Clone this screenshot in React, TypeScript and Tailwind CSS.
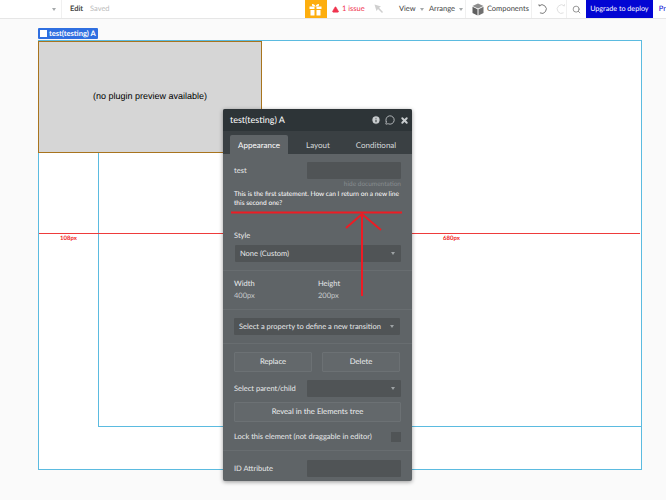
import { Info, MessageCircle, Search, TriangleAlert, X } from "lucide-react"

function Caret() {
  return <span className="ml-[4px] inline-block h-0 w-0 border-x-[2.5px] border-t-[3px] border-x-transparent border-t-[#a5a9ab]" />
}

function Arc({ color, flip }: { color: string; flip?: boolean }) {
  return (
    <svg width="11" height="11" viewBox="0 0 11 11" fill="none" stroke={color} strokeWidth="1" className={flip ? "-scale-x-100" : ""}>
      <path d="M2.500 1.500H1V0M1.200 1.700A4.500 4.500 0 1 1 2 9" />
    </svg>
  )
}

function GiftIcon() {
  return (
    <svg width="13" height="13" viewBox="0 0 13 13" fill="white">
      <path d="M0.500 3.500H5.500V6H0.500ZM7.500 3.500H12.500V6H7.500ZM1.500 7H5.500V12.500H1.500ZM7.500 7H11.500V12.500H7.500Z" />
      <path d="M6.500 3.500C5 0.500 2.500 0.500 3 2.200C3.300 3.200 5 3.500 6.500 3.500C8 3.500 9.700 3.200 10 2.200C10.500 0.500 8 0.500 6.500 3.500Z" />
    </svg>
  )
}

function CursorIcon() {
  return (
    <svg width="10" height="10" viewBox="0 0 10 10" fill="#cfcfcf">
      <path d="M0.500 0.500L7 2.500L5 3.800L9 8L8 9L4 5L2.500 7Z" />
    </svg>
  )
}

function CubeIcon() {
  return (
    <svg width="12" height="13" viewBox="0 0 12 13">
      <path d="M6 0.500L11.500 3L6 5.500L0.500 3Z" fill="#8d8d8d" />
      <path d="M0.500 3.800L5.500 6.200V12.500L0.500 10Z" fill="#5f5f5f" />
      <path d="M11.500 3.800L6.500 6.200V12.500L11.500 10Z" fill="#6f6f6f" />
    </svg>
  )
}

function TopBar() {
  return (
    <div className="flex h-[19px] items-stretch whitespace-nowrap border-b border-[#e6e6e6] bg-white text-[7.5px] text-[#444]">
      <div className="flex w-[62px] items-center justify-end border-r border-[#f0f0f0] pr-[5px]">
        <Caret />
      </div>
      <div className="flex w-[243px] items-center pl-[8px]">
        <span className="w-[20px] font-bold">Edit</span>
        <span className="text-[#bbb]">Saved</span>
      </div>
      <div className="flex w-[22px] items-center justify-center bg-[#fdae0e]">
        <GiftIcon />
      </div>
      <div className="flex w-[47px] items-center pl-[5px] text-[#f0344f]">
        <TriangleAlert size={7} fill="#f0344f" className="mr-[3px]" />
        <span>1 issue</span>
      </div>
      <div className="flex w-[25px] items-center">
        <CursorIcon />
      </div>
      <div className="flex w-[30px] items-center">View<Caret /></div>
      <div className="flex w-[37px] items-center border-r border-[#f0f0f0]">Arrange<Caret /></div>
      <div className="flex w-[66px] items-center border-r border-[#f0f0f0] pl-[6px]">
        <span className="mr-[3px] flex"><CubeIcon /></span>
        Components
      </div>
      <div className="flex w-[35px] items-center gap-[7px] border-r border-[#f0f0f0] pl-[6px]">
        <Arc color="#777" />
        <Arc color="#ddd" flip />
      </div>
      <div className="flex w-[19px] items-center justify-center">
        <Search size={9} className="text-[#777]" />
      </div>
      <div className="flex w-[67px] items-center justify-center bg-[#0205d3] text-[7.2px] text-white">Upgrade to deploy</div>
      <div className="flex flex-1 items-center pl-[6px] text-[#0205d3]">Pr</div>
    </div>
  )
}

function Field() {
  return <div className="h-[17px] w-[94px] rounded-[1px] bg-[#505456]" />
}

function Select({ label, width }: { label: string; width: string }) {
  return (
    <div className={`flex h-[17px] items-center rounded-[1px] bg-[#505456] pl-[5px] pr-[6px] text-[#e6e8e9] ${width}`}>
      {label}
      <span className="ml-auto h-0 w-0 border-x-[2.5px] border-t-[3px] border-x-transparent border-t-[#9ea2a4]" />
    </div>
  )
}

function PanelButton({ label, className }: { label: string; className: string }) {
  return (
    <div className={`flex h-[20px] items-center justify-center rounded-[1px] border border-[#6c7174] bg-[#63686b] text-[7.7px] text-[#eef0f1] ${className}`}>
      {label}
    </div>
  )
}

function Panel() {
  return (
    <div className="absolute left-[223px] top-[109px] h-[372px] w-[189px] overflow-hidden rounded-[2px] bg-[#5f6467] text-[7.5px] text-[#e8eaeb] shadow-[0_1px_4px_rgba(0,0,0,0.4)]">
      <div className="flex h-[22px] items-center justify-between bg-[#2d3437] pl-[7px] pr-[3px]">
        <span className="text-[9px] text-white">test(testing) A</span>
        <div className="flex items-center gap-[4px] text-[#c9cdcf]">
          <Info size={10} fill="#c9cdcf" stroke="#2d3437" strokeWidth={2.5} />
          <MessageCircle size={10} />
          <X size={9} strokeWidth={5} className="ml-[1px]" />
        </div>
      </div>
      <div className="flex h-[23px] items-end bg-[#3a4043] pl-[7px] text-[8px] text-[#d5d8da]">
        <div className="flex h-[19px] w-[58px] items-center justify-center rounded-t-[2px] bg-[#5f6467] text-white">Appearance</div>
        <div className="flex h-[19px] w-[60px] items-center justify-center">Layout</div>
        <div className="flex h-[19px] w-[56px] items-center justify-center">Conditional</div>
      </div>

      <div className="flex items-center justify-between px-[11px] pt-[8px]">
        <span>test</span>
        <Field />
      </div>
      <div className="mt-px pr-[11px] text-right text-[6.5px] leading-[9px] text-[#878c8f]">hide documentation</div>
      <p className="mt-px px-[11px] text-[6.6px] leading-[9px] text-white">
        This is the first statement. How can I return on a new line this second one?
      </p>

      <div className="mt-[23px] px-[11px] leading-[10px]">Style</div>
      <div className="mt-[4px] border-b border-[#686d70] pb-[8px] pl-[12px] pr-[11px]">
        <Select label="None (Custom)" width="w-[166px]" />
      </div>
      <div className="flex border-b border-[#686d70] pb-[7px] pl-[11px] pt-[7px] leading-[12px]">
        <div className="w-[84px]"><div>Width</div><div className="text-[#c4c8ca]">400px</div></div>
        <div><div>Height</div><div className="text-[#c4c8ca]">200px</div></div>
      </div>
      <div className="border-b border-[#686d70] pb-[8px] pl-[11px] pt-[8px]">
        <Select label="Select a property to define a new transition" width="w-[166px]" />
      </div>

      <div className="flex gap-[10px] pl-[11px] pt-[8px]">
        <PanelButton label="Replace" className="w-[78px]" />
        <PanelButton label="Delete" className="w-[78px]" />
      </div>
      <div className="flex items-center justify-between px-[11px] pt-[8px]">
        <span>Select parent/child</span>
        <Select label="" width="w-[94px]" />
      </div>
      <div className="px-[11px] pt-[5px]">
        <PanelButton label="Reveal in the Elements tree" className="w-full" />
      </div>
      <div className="flex items-center justify-between border-b border-[#686d70] px-[11px] pb-[8px] pt-[9px]">
        <span>Lock this element (not draggable in editor)</span>
        <div className="h-[10px] w-[10px] bg-[#505456]" />
      </div>
      <div className="flex items-center justify-between px-[11px] pt-[9px]">
        <span>ID Attribute</span>
        <Field />
      </div>
    </div>
  )
}

function Canvas() {
  return (
    <>
      <div className="absolute left-[38px] top-[28px] flex h-[11px] w-[60px] items-center gap-[2px] whitespace-nowrap rounded-[1px] bg-[#2f6fe0] px-[2px] text-[7.5px] font-bold text-white">
        <span className="h-[7px] w-[7px] shrink-0 bg-white" />
        test(testing) A
      </div>
      <div className="absolute left-[38px] top-[40px] h-[430px] w-[604px] border border-[#5bbbe0] bg-white" />
      <div className="absolute left-[38px] top-[41px] flex h-[112px] w-[224px] items-center justify-center border border-[#a8741e] bg-[#d6d6d6] font-['Liberation_Sans',sans-serif] text-[9px] text-black">
        (no plugin preview available)
      </div>
      <div className="absolute left-[98px] top-[153px] h-[274px] w-[544px] border-b border-l border-r border-[#5bbbe0]" />
      <div className="absolute left-[39px] top-[233px] h-px w-[601px] bg-[#ee3b3b]" />
      <span className="absolute left-[60px] top-[234px] text-[6px] font-bold text-[#f01c1c]">108px</span>
      <span className="absolute left-[443px] top-[234px] text-[6px] font-bold text-[#f01c1c]">680px</span>
    </>
  )
}

function Annotation() {
  return (
    <svg className="absolute left-0 top-0" width="666" height="500" fill="none" stroke="#ed1c24" strokeWidth="2">
      <path d="M231 212.500H402" />
      <path d="M362 296V214M346 228L362 214L381 230" />
    </svg>
  )
}

export default function App() {
  return (
    <div className="relative h-[500px] w-[666px] overflow-hidden bg-[#fafafa] font-['Lato',sans-serif] [text-rendering:geometricPrecision]">
      <TopBar />
      <Canvas />
      <Panel />
      <Annotation />
    </div>
  )
}
